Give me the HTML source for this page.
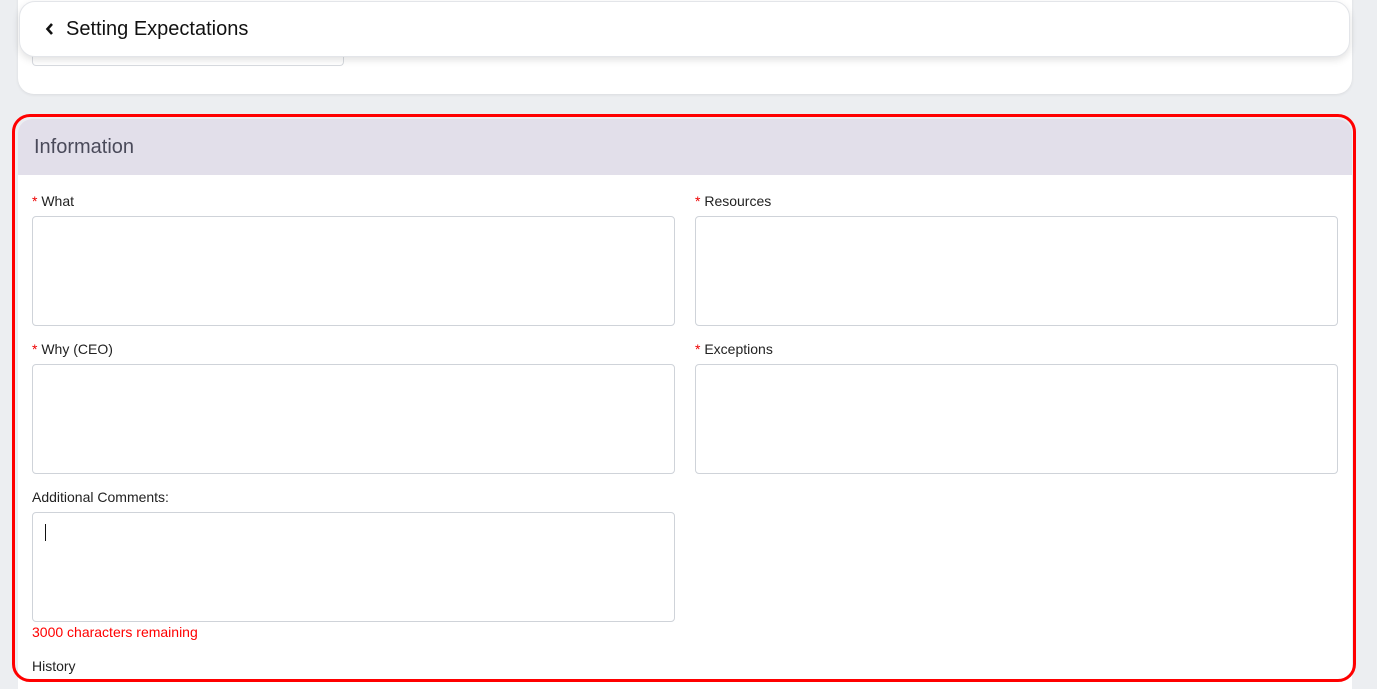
<!DOCTYPE html>
<html><head><style>
body{margin:0;width:1377px;height:684px;background:#eceef1;font-family:"Liberation Sans",sans-serif;position:relative;overflow:hidden}
.card{position:absolute;left:18px;top:-20px;width:1334px;height:114px;background:#fff;border-radius:16px;box-shadow:0 1px 3px rgba(0,0,0,.08)}
.inp{position:absolute;left:32px;top:38px;width:310px;height:27px;border:1px solid #d8dbe0;border-top:none;border-radius:0 0 4px 4px}
.bar{position:absolute;left:19px;top:1px;width:1331px;height:56px;background:#fff;border-radius:16px;box-shadow:0 3px 8px rgba(0,0,0,.12);border:1px solid #e3e5e9;box-sizing:border-box}
.bar span{position:absolute;left:46px;top:16px;font-size:20px;color:#111}
.red{position:absolute;left:12px;top:114px;width:1338px;height:562px;border:3px solid #f00;border-radius:18px}
.info{position:absolute;left:18px;top:119px;width:1334px;height:570px;background:#fff;border-radius:14px 14px 0 0;overflow:hidden}
.hd{height:56px;background:#e2dfea;}
.hd span{position:absolute;left:16px;top:17px;font-size:20px;color:#4a4a5a}
.lbl{position:absolute;font-size:14px;color:#222}
.lbl b{color:#e00;font-weight:normal}
.ta{position:absolute;width:641px;height:108px;border:1px solid #cfd3d9;border-radius:4px;box-sizing:content-box}
</style></head><body>
<div class="card"></div>
<div class="inp"></div>
<div class="bar"><svg style="position:absolute;left:25px;top:20px" width="10" height="14" viewBox="0 0 10 14"><path d="M7 2L2.5 7L7 12" stroke="#111" stroke-width="2.6" fill="none"/></svg><span>Setting Expectations</span></div>
<div class="info"><div class="hd"><span>Information</span></div></div>
<div class="red"></div>
<div class="lbl" style="left:32px;top:193px"><b>*</b> What</div>
<div class="lbl" style="left:695px;top:193px"><b>*</b> Resources</div>
<div class="ta" style="left:32px;top:216px"></div>
<div class="ta" style="left:695px;top:216px"></div>
<div class="lbl" style="left:32px;top:341px"><b>*</b> Why (CEO)</div>
<div class="lbl" style="left:695px;top:341px"><b>*</b> Exceptions</div>
<div class="ta" style="left:32px;top:364px"></div>
<div class="ta" style="left:695px;top:364px"></div>
<div class="lbl" style="left:32px;top:489px">Additional Comments:</div>
<div class="ta" style="left:32px;top:512px"><div style="position:absolute;left:12px;top:11px;width:1px;height:17px;background:#111"></div></div>
<div class="lbl" style="left:32px;top:624px;color:#f00">3000 characters remaining</div>
<div class="lbl" style="left:32px;top:658px">History</div>
</body></html>
